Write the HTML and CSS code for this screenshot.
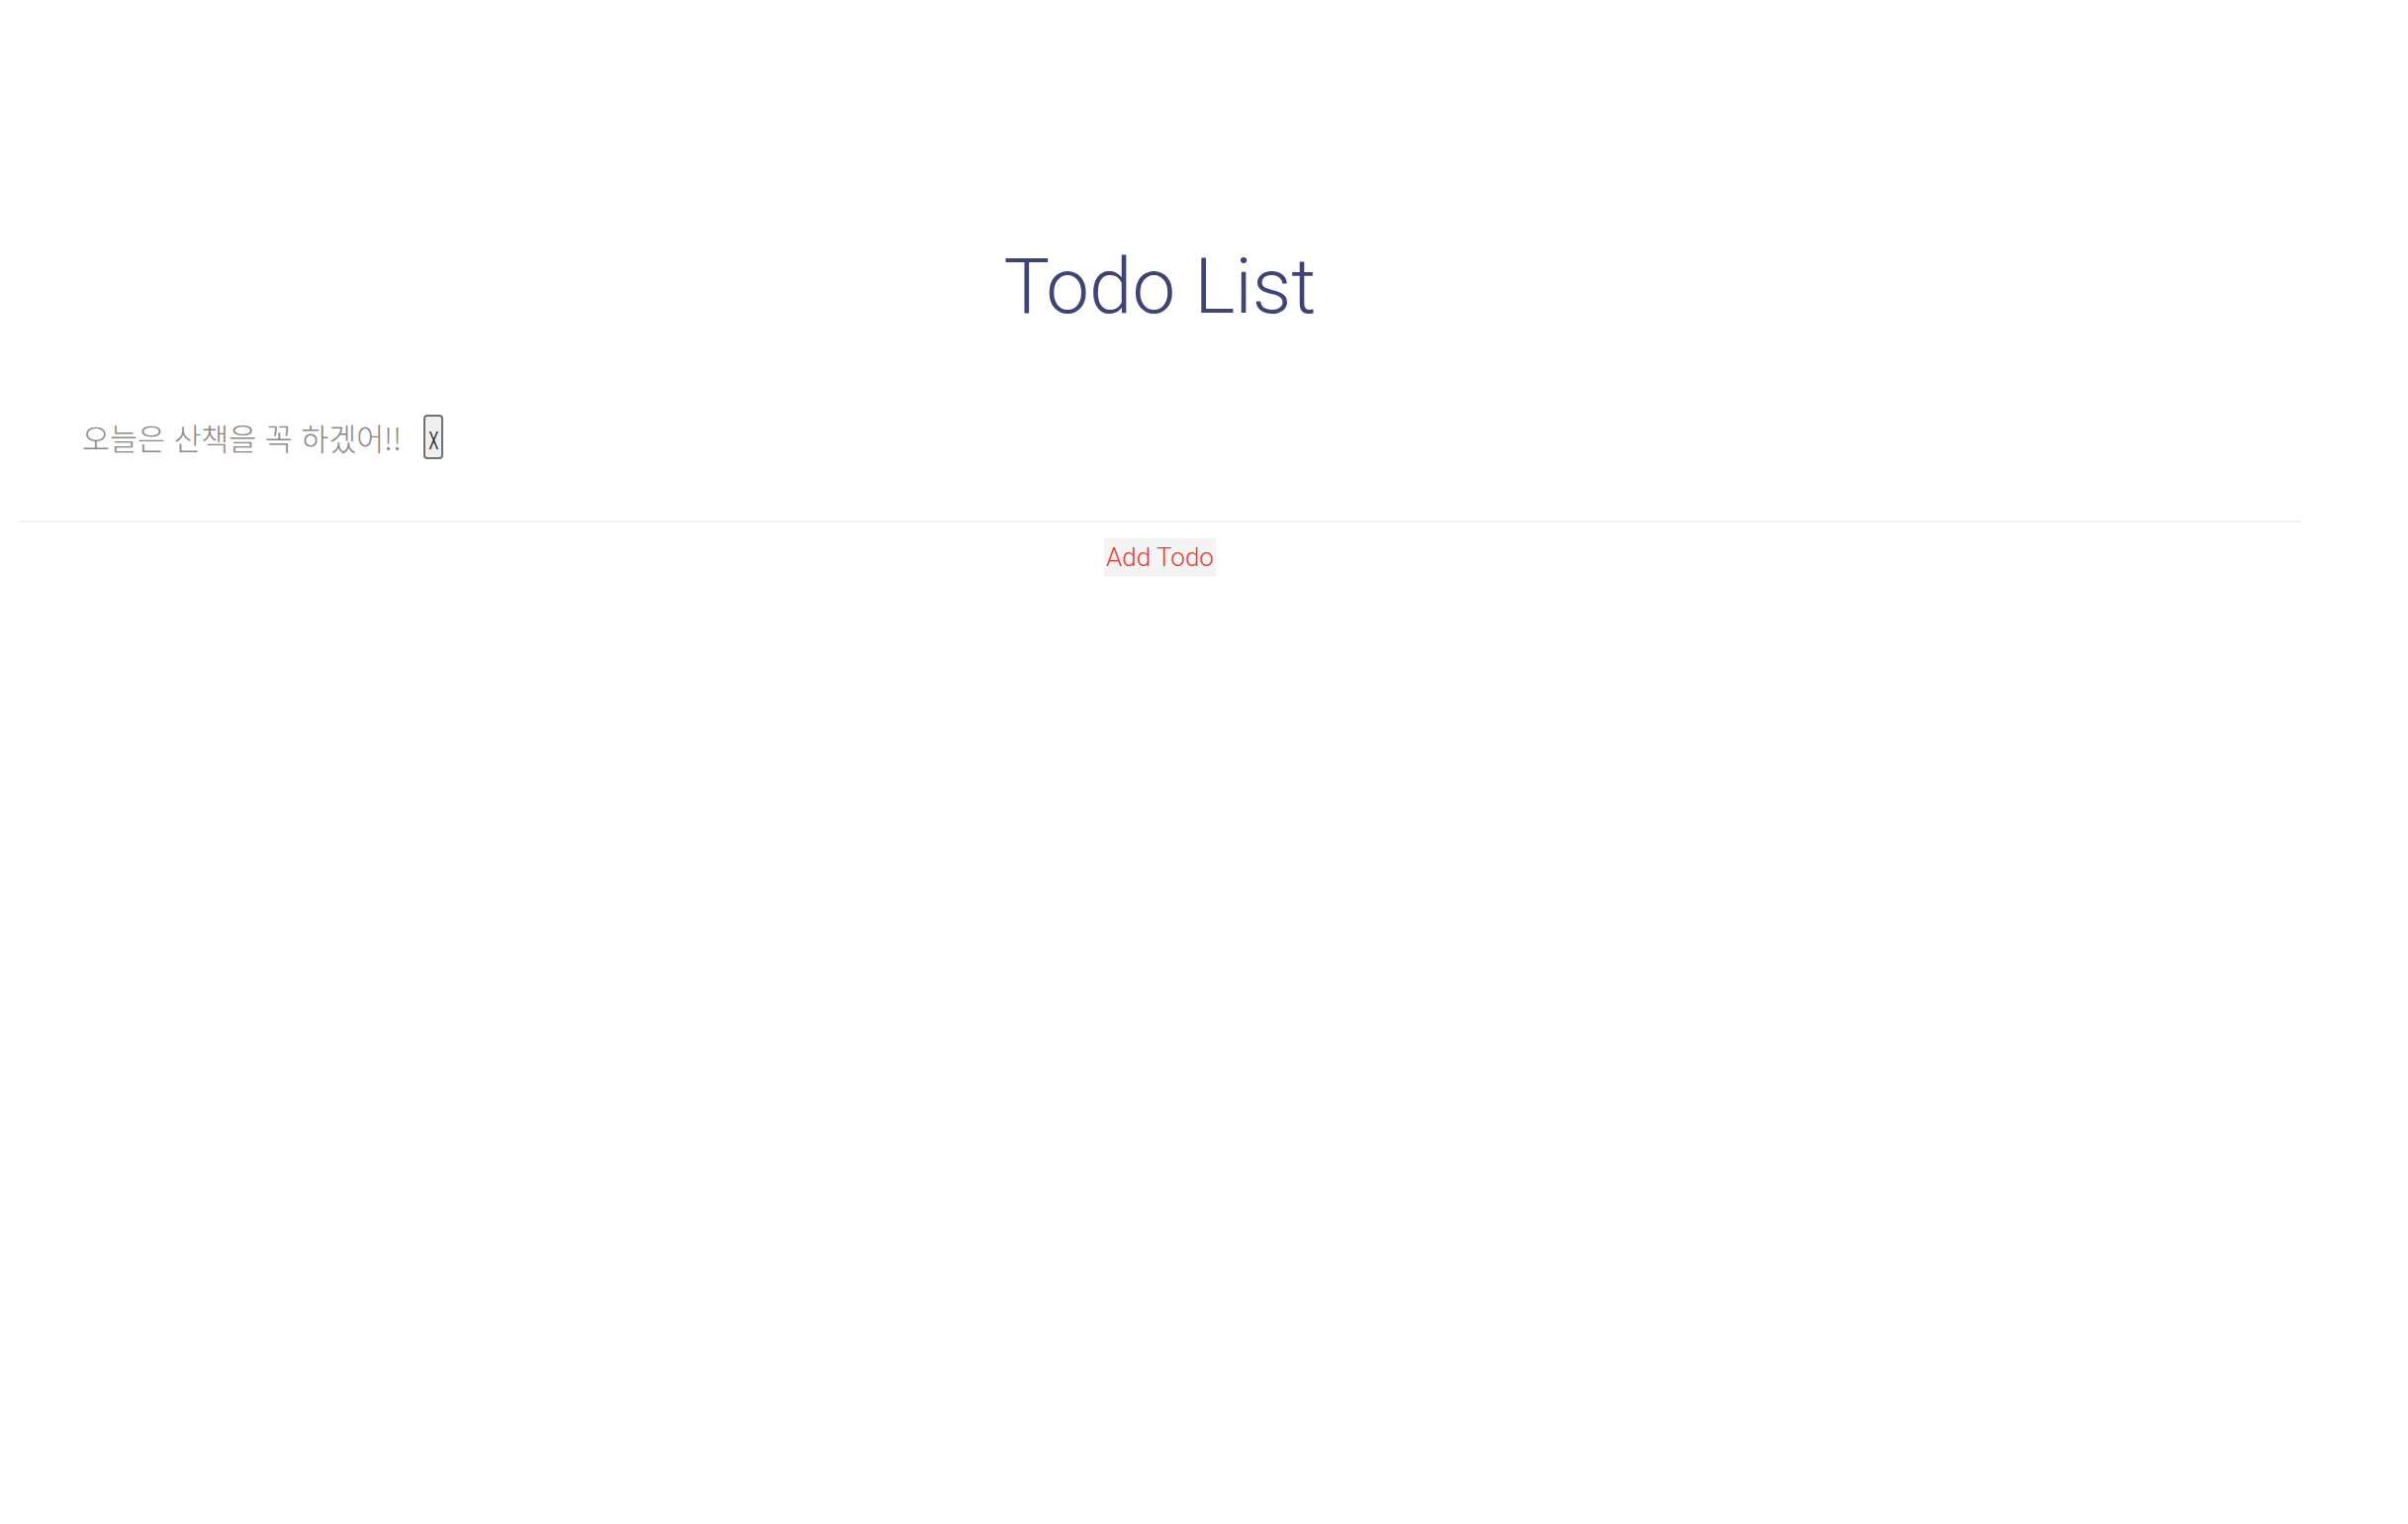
FILE: index.html
```html
<!DOCTYPE html>
<html lang="ko">
<head>
<meta charset="utf-8">
<title>Todo List</title>
<link rel="stylesheet" href="styles.css">
</head>
<body>
<div class="app">
  <h1 class="title">Todo List</h1>
  <ul class="list">
    <li class="item">
      <span class="item-text">오늘은 산책을 꼭 하겠어!!</span>
      <button class="remove"><span class="remove-glyph">x</span></button>
    </li>
  </ul>
  <div class="actions">
    <button class="add">Add Todo</button>
  </div>
</div>
</body>
</html>
```
FILE: styles.css
```css
html, body {
  margin: 0;
  padding: 0;
  background: #ffffff;
}
.app {
  margin-left: 19px;
  width: 2307px;
  padding-top: 242px;
  font-family: Roboto, "Noto Sans CJK KR", sans-serif;
}
.title {
  margin: 0;
  font-weight: 300;
  font-size: 78px;
  line-height: 95px;
  text-align: center;
  color: #3f4478;
}
.list {
  list-style: none;
  margin: 0;
  padding: 82px 0 62px 64px;
  border-bottom: 2px solid #f2f2f2;
}
.item {
  display: flex;
  align-items: center;
  gap: 22px;
  height: 45px;
}
.item-text {
  font-family: "Noto Sans CJK KR", sans-serif;
  font-weight: 300;
  font-size: 30.4px;
  color: #888888;
}
.remove {
  box-sizing: border-box;
  width: 20px;
  height: 45px;
  padding: 0;
  border: 2px solid #707070;
  border-radius: 4px;
  background: #efefef;
  color: #1a1a1a;
  font-family: Roboto, sans-serif;
  font-weight: 300;
  font-size: 34px;
  line-height: 1;
  display: flex;
  align-items: center;
  justify-content: center;
}
.remove-glyph {
  display: inline-block;
  transform: scaleX(0.62);
}
.actions {
  display: flex;
  justify-content: center;
  padding-top: 16px;
}
.add {
  border: none;
  background: #f4f4f4;
  color: #f2392c;
  font-family: Roboto, sans-serif;
  font-weight: 300;
  font-size: 26px;
  line-height: 39px;
  height: 39px;
  padding: 0 2px;
}
```
